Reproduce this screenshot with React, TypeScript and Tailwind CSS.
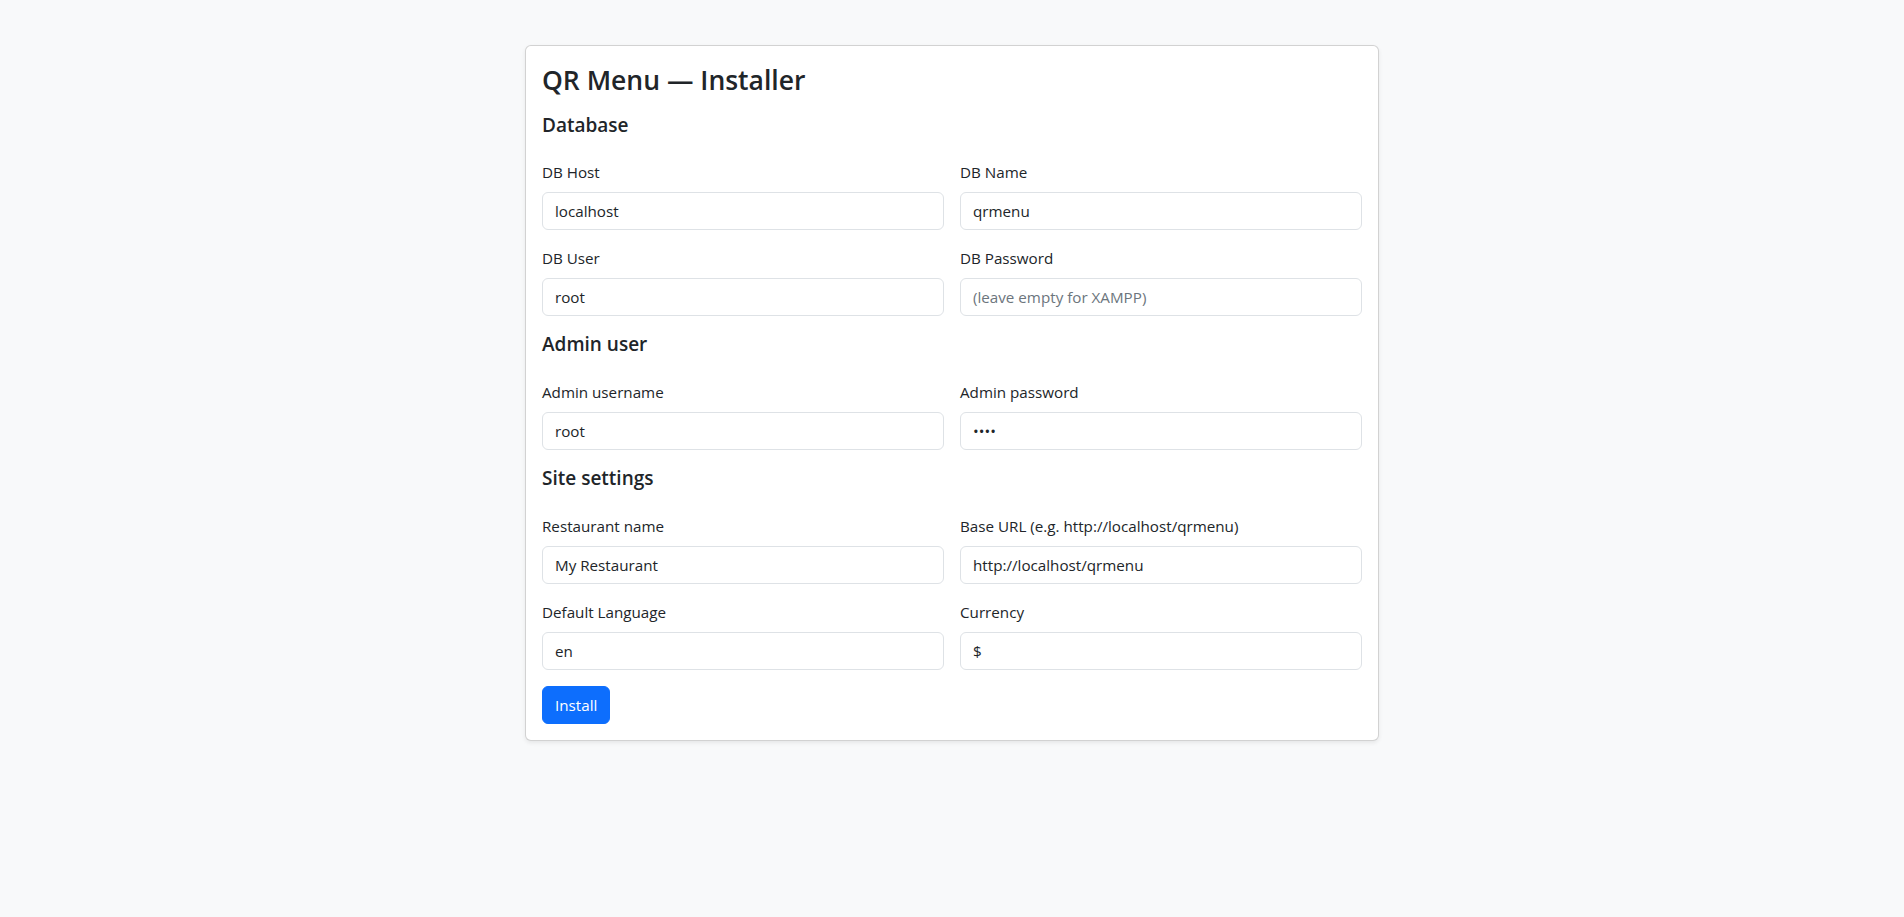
import React from "react";

const font = { fontFamily: '"Segoe UI", "Open Sans", "Noto Sans", Arial, sans-serif' };

function Field({ label, value, placeholder, type = "text" }: { label: string; value?: string; placeholder?: string; type?: string }) {
  return (
    <div className="flex flex-col">
      <label className="mb-2 block text-[15.2px] leading-6 text-[#212529]">{label}</label>
      <input
        type={type}
        defaultValue={value}
        placeholder={placeholder}
        className="block h-[38px] w-full rounded-[6px] border border-[#dee2e6] bg-white px-3 text-[15.2px] leading-6 text-[#212529] outline-none placeholder:text-[#6c757d]"
      />
    </div>
  );
}

function Section({ title, first, children }: { title: string; first?: boolean; children: React.ReactNode }) {
  return (
    <div className={first ? "mt-[14px]" : "mt-4"}>
      <h5 className={`${first ? "mb-[23px] pt-[1px]" : "mb-6"} text-[19px] font-semibold leading-6 text-[#212529]`}>{title}</h5>
      <div className="grid grid-cols-2 gap-4">{children}</div>
    </div>
  );
}

export default function App() {
  return (
    <div className="min-h-[917px] w-full bg-[#f8f9fa] pt-[45px]" style={font}>
      <div className="mx-auto w-[854px] rounded-[6px] border border-[rgba(0,0,0,0.175)] bg-white p-4 shadow-[0_2px_4px_rgba(0,0,0,0.075)]">
        <h3 className="pt-[2px] text-[26.5px] font-semibold leading-[33.6px] text-[#212529]">QR Menu — Installer</h3>
        <Section title="Database" first>
          <Field label="DB Host" value="localhost" />
          <Field label="DB Name" value="qrmenu" />
          <Field label="DB User" value="root" />
          <Field label="DB Password" placeholder="(leave empty for XAMPP)" type="password" />
        </Section>
        <Section title="Admin user">
          <Field label="Admin username" value="root" />
          <Field label="Admin password" value="root" type="password" />
        </Section>
        <Section title="Site settings">
          <Field label="Restaurant name" value="My Restaurant" />
          <Field label="Base URL (e.g. http://localhost/qrmenu)" value="http://localhost/qrmenu" />
          <Field label="Default Language" value="en" />
          <Field label="Currency" value="$" />
        </Section>
        <button className="mt-4 h-[38px] rounded-[6px] border border-[#0d6efd] bg-[#0d6efd] px-3 text-[15.2px] leading-6 text-white">
          Install
        </button>
      </div>
    </div>
  );
}
